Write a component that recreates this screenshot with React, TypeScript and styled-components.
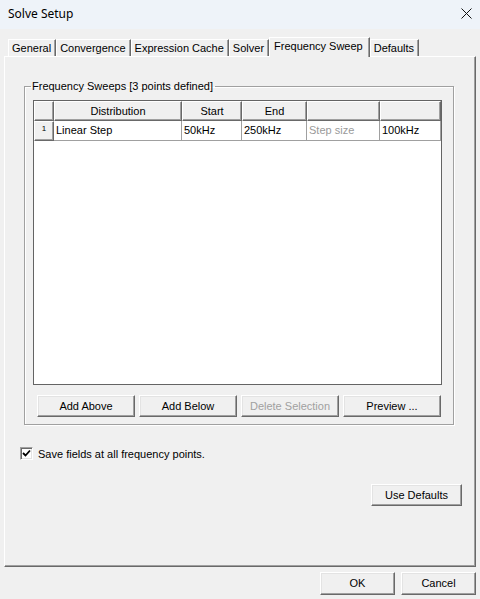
import React, { useState } from 'react';
import styled, { createGlobalStyle } from 'styled-components';

const GlobalStyle = createGlobalStyle`
  html, body {
    margin: 0;
    padding: 0;
    background: #f0f0f0;
  }
  * {
    box-sizing: border-box;
  }
`;

const Window = styled.div`
  width: 480px;
  height: 599px;
  background: #f0f0f0;
  display: flex;
  flex-direction: column;
  font-family: 'Liberation Sans', Arial, sans-serif;
  font-size: 11px;
  color: #000;
  overflow: hidden;
`;

const TitleBar = styled.div`
  height: 29px;
  background: #eef3f9;
  display: flex;
  align-items: center;
  justify-content: space-between;
  padding: 0 8px 2px 8px;
  font-family: 'Noto Sans', 'Liberation Sans', sans-serif;
  font-size: 12px;
`;

const CloseBtn = styled.button`
  border: none;
  background: transparent;
  padding: 0;
  width: 12px;
  height: 12px;
  display: flex;
  align-items: center;
  justify-content: center;
`;

const TabStrip = styled.div`
  display: flex;
  align-items: flex-end;
  height: 19px;
  margin-top: 8px;
  padding-left: 8px;
`;

const Tab = styled.div<{ $active?: boolean }>`
  height: ${({ $active }) => ($active ? '20px' : '17px')};
  margin-bottom: ${({ $active }) => ($active ? '-1px' : '0')};
  padding: 0 ${({ $active }) => ($active ? '6px' : '4px')} ${({ $active }) => ($active ? '3px' : '0')}
    ${({ $active }) => ($active ? '4px' : '3px')};
  display: flex;
  align-items: center;
  background: #f0f0f0;
  border-top: 1px solid #fff;
  border-left: 1px solid #fff;
  border-right: 1px solid #696969;
  box-shadow: inset -1px 0 0 #a0a0a0;
  position: relative;
  z-index: ${({ $active }) => ($active ? 2 : 0)};
  white-space: nowrap;
`;

const Panel = styled.div`
  margin: 0 4px;
  height: 511px;
  border-top: 1px solid #fff;
  border-left: 1px solid #fff;
  border-right: 1px solid #696969;
  border-bottom: 1px solid #696969;
  box-shadow: inset -1px -1px 0 #a0a0a0;
  display: flex;
  flex-direction: column;
  padding: 23px 13px 0 19px;
`;

const Group = styled.fieldset`
  width: 430px;
  margin: 0;
  padding: 7px 11px 7px 8px;
  border: 1px solid #a0a0a0;
  box-shadow: inset 1px 1px 0 #fff, 1px 1px 0 #fff;
  min-width: 0;
`;

const Legend = styled.legend`
  padding: 0 2px 0 1px;
  margin-left: -2px;
  line-height: 13px;
`;

const Grid = styled.div`
  width: 409px;
  height: 285px;
  background: #fff;
  border: 1px solid #646464;
  display: grid;
  grid-template-columns: 20px 128px 60px 65px 73px 61px;
  grid-auto-rows: 20px;
  align-content: start;
`;

const HeadCell = styled.div`
  background: #f0f0f0;
  border-top: 1px solid #fff;
  border-left: 1px solid #fff;
  border-right: 1px solid #696969;
  border-bottom: 1px solid #696969;
  box-shadow: inset -1px -1px 0 #a0a0a0;
  display: flex;
  align-items: center;
  justify-content: center;
  padding-bottom: 1px;
`;

const RowHead = styled(HeadCell)`
  align-items: flex-start;
  padding-top: 2px;
  font-size: 8px;
`;

const Cell = styled.div<{ $hint?: boolean }>`
  border-right: 1px solid #a0a0a0;
  border-bottom: 1px solid #a0a0a0;
  display: flex;
  align-items: center;
  padding: 0 0 1px 2px;
  color: ${({ $hint }) => ($hint ? '#9a9a9a' : '#000')};
`;

const ButtonRow = styled.div<{ $gap: number }>`
  display: flex;
  gap: ${({ $gap }) => $gap}px;
`;

const Btn = styled.button<{ $w: number; $h?: number }>`
  width: ${({ $w }) => $w}px;
  height: ${({ $h }) => $h ?? 22}px;
  padding: 0 0 1px 0;
  background: #f0f0f0;
  border-top: 1px solid #fff;
  border-left: 1px solid #fff;
  border-right: 1px solid #696969;
  border-bottom: 1px solid #696969;
  box-shadow: inset -1px -1px 0 #a0a0a0, inset 1px 1px 0 #e3e3e3;
  font-family: 'Liberation Sans', Arial, sans-serif;
  font-size: 11px;
  color: #000;
  &:disabled {
    color: #a0a0a0;
  }
`;

const GroupButtons = styled(ButtonRow)`
  margin: 10px 0 0 4px;
`;

const CheckRow = styled.label`
  display: flex;
  align-items: center;
  gap: 5px;
  margin: 22px 0 0 -4px;
  height: 13px;
`;

const CheckBox = styled.span`
  width: 13px;
  height: 13px;
  background: #fff;
  border-top: 1px solid #a0a0a0;
  border-left: 1px solid #a0a0a0;
  border-right: 1px solid #fff;
  border-bottom: 1px solid #fff;
  box-shadow: inset 1px 1px 0 #696969, inset -1px -1px 0 #e3e3e3;
  display: flex;
  align-items: center;
  justify-content: center;
`;

const DefaultsRow = styled.div`
  display: flex;
  justify-content: flex-end;
  margin-top: 24px;
`;

const Footer = styled(ButtonRow)`
  justify-content: flex-end;
  margin: 5px 4px 0 0;
`;

const tabs = ['General', 'Convergence', 'Expression Cache', 'Solver', 'Frequency Sweep', 'Defaults'];

const App = () => {
  const [active, setActive] = useState('Frequency Sweep');
  const [saveFields, setSaveFields] = useState(true);

  return (
    <Window>
      <GlobalStyle />
      <TitleBar>
        <span>Solve Setup</span>
        <CloseBtn aria-label="Close">
          <svg width="11" height="11" viewBox="0 0 11 11">
            <path d="M0.5 0.5 L10.5 10.5 M10.5 0.5 L0.5 10.5" stroke="#111" strokeWidth="1" />
          </svg>
        </CloseBtn>
      </TitleBar>

      <TabStrip>
        {tabs.map((t) => (
          <Tab key={t} $active={t === active} onClick={() => setActive(t)}>
            {t}
          </Tab>
        ))}
      </TabStrip>

      <Panel>
        <Group>
          <Legend>Frequency Sweeps [3 points defined]</Legend>
          <Grid>
            <HeadCell />
            <HeadCell>Distribution</HeadCell>
            <HeadCell>Start</HeadCell>
            <HeadCell>End</HeadCell>
            <HeadCell />
            <HeadCell />

            <RowHead>1</RowHead>
            <Cell>Linear Step</Cell>
            <Cell>50kHz</Cell>
            <Cell>250kHz</Cell>
            <Cell $hint>Step size</Cell>
            <Cell>100kHz</Cell>
          </Grid>
          <GroupButtons $gap={4}>
            <Btn $w={98}>Add Above</Btn>
            <Btn $w={98}>Add Below</Btn>
            <Btn $w={98} disabled>
              Delete Selection
            </Btn>
            <Btn $w={98}>Preview ...</Btn>
          </GroupButtons>
        </Group>

        <CheckRow onClick={() => setSaveFields(!saveFields)}>
          <CheckBox>
            {saveFields && (
              <svg width="9" height="9" viewBox="0 0 9 9">
                <path d="M1 4 L3.5 6.5 L8 1.5" stroke="#000" strokeWidth="1.8" fill="none" />
              </svg>
            )}
          </CheckBox>
          Save fields at all frequency points.
        </CheckRow>

        <DefaultsRow>
          <Btn $w={91}>Use Defaults</Btn>
        </DefaultsRow>
      </Panel>

      <Footer $gap={6}>
        <Btn $w={75} $h={23}>
          OK
        </Btn>
        <Btn $w={75} $h={23}>
          Cancel
        </Btn>
      </Footer>
    </Window>
  );
};

export default App;
